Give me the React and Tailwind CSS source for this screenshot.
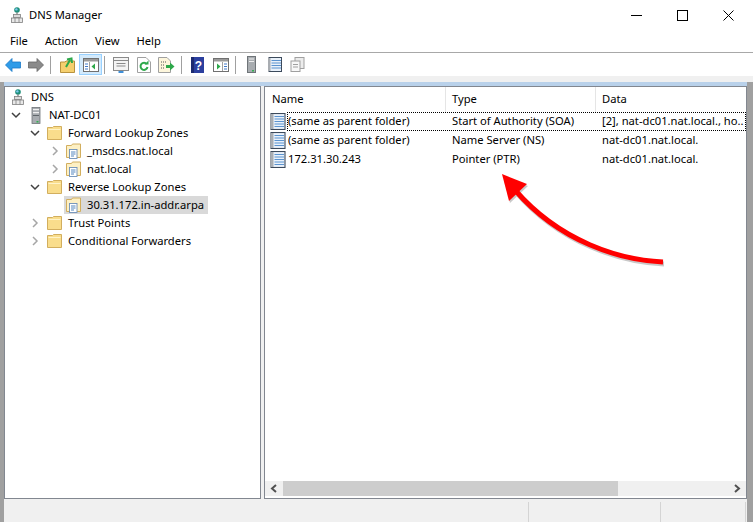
import React from "react";

const font = { fontFamily: '"Noto Sans", sans-serif' };

function Chevron({ open }) {
  return (
    <svg width="10" height="10" viewBox="0 0 10 10" className="shrink-0">
      {open ? (
        <path d="M1 3 L5 7 L9 3" fill="none" stroke="#404040" strokeWidth="1.5" />
      ) : (
        <path d="M3 1 L7 5 L3 9" fill="none" stroke="#a6a6a6" strokeWidth="1.5" />
      )}
    </svg>
  );
}

function DnsIcon() {
  return (
    <svg width="12" height="16" viewBox="0 0 12 16" className="shrink-0">
      <circle cx="6" cy="3" r="2.8" fill="#1f8f7a" />
      <circle cx="5.4" cy="2.4" r="1.2" fill="#7cc8ee" />
      <rect x="5.4" y="5.5" width="1.2" height="2.5" fill="#777" />
      <rect x="2.5" y="7.5" width="7" height="3" fill="#dcdcdc" stroke="#808080" strokeWidth="0.8" />
      <rect x="0.5" y="11" width="11" height="4.5" fill="#e8e8e8" stroke="#808080" strokeWidth="0.8" />
      <path d="M4 11 V15.5 M8 11 V15.5" stroke="#808080" strokeWidth="0.8" />
    </svg>
  );
}

function Server() {
  return (
    <svg width="10" height="17" viewBox="0 0 10 17" className="shrink-0">
      <rect x="1" y="0.5" width="8" height="16" fill="#a8acb0" stroke="#6f7478" strokeWidth="0.8" />
      <rect x="2" y="2" width="6" height="1.2" fill="#f0f0f0" />
      <rect x="2" y="5" width="6" height="1.2" fill="#f0f0f0" />
      <rect x="2" y="8" width="6" height="1" fill="#60666a" />
      <rect x="5.5" y="14" width="2" height="1.5" fill="#30b050" />
    </svg>
  );
}

function Folder() {
  return (
    <svg width="15" height="14" viewBox="0 0 15 14" className="shrink-0">
      <path d="M0.5 1.5 H5.5 L6.5 0.5 H14.5 V13.5 H0.5 Z" fill="#f9dd8c" stroke="#d2ae5e" strokeWidth="1" />
      <path d="M1.5 3.5 H13.5" stroke="#fff3c8" strokeWidth="1" />
    </svg>
  );
}

function ZoneFolder() {
  return (
    <svg width="15" height="16" viewBox="0 0 15 16" className="shrink-0">
      <path d="M0.5 2.5 H5.5 L6.5 1 H14.5 V14.5 H0.5 Z" fill="#fdf0c4" stroke="#d2ae5e" strokeWidth="1" />
      <rect x="3.5" y="6.5" width="7.5" height="9" fill="#fff" stroke="#6d8fb8" strokeWidth="0.9" />
      <path d="M5 9 H9.5 M5 11 H9.5 M5 13 H8" stroke="#3f78b8" strokeWidth="0.9" />
    </svg>
  );
}

function RecordIcon() {
  return (
    <svg width="16" height="17" viewBox="0 0 16 17" className="shrink-0">
      <rect x="1" y="0.5" width="14" height="16" fill="#e9f1fa" stroke="#3c4a5c" strokeWidth="1.1" />
      <rect x="0.5" y="1" width="3" height="15" fill="#a9adb2" />
      <path d="M4.5 3.5 H14 M4.5 6 H14 M4.5 8.5 H14 M4.5 11 H14 M4.5 13.5 H14" stroke="#5b93cf" strokeWidth="1.1" />
    </svg>
  );
}

function TreeRow({ indent, chevron, icon, label, iconGap, iconLeft, selected }) {
  return (
    <div className={`flex h-[18px] items-center ${indent}`}>
      <span className="flex w-[12px] shrink-0 justify-center">{chevron}</span>
      <span className={`flex h-full items-center ${iconLeft} ${iconGap} ${selected ? "bg-[#d9d9d9] pr-[4px]" : ""}`}>
        {icon}
        <span className="whitespace-nowrap">{label}</span>
      </span>
    </div>
  );
}

function Row({ name, type, data, focused }) {
  return (
    <div className="flex h-[19px] items-center">
      <div className="ml-[5px] shrink-0">
        <RecordIcon />
      </div>
      <div className={`ml-[1px] flex h-full min-w-0 flex-1 items-center border border-dotted ${focused ? "border-black" : "border-transparent"}`}>
        <div className="w-[158px] shrink-0 whitespace-nowrap">{name}</div>
        <div className="w-[150px] shrink-0 whitespace-nowrap pl-[6px]">{type}</div>
        <div className="min-w-0 whitespace-nowrap pl-[6px]">{data}</div>
      </div>
    </div>
  );
}

function ToolbarDivider({ spacing = "ml-[3px] mr-[4px]" }) {
  return <span className={`h-[18px] w-px bg-[#a0a0a0] ${spacing}`} />;
}

function Tool({ children, active }) {
  return (
    <span className={`flex h-[21px] w-[23px] items-center justify-center ${active ? "border border-[#99d1ff] bg-[#d3eafc]" : ""}`}>
      {children}
    </span>
  );
}

function Toolbar() {
  return (
    <div className="flex h-[24px] items-center border-t border-[#a8a8a8] pl-[5px]">
      <svg width="16" height="14" viewBox="0 0 16 14"><path d="M0.5 7 L7 0.5 V4 H15.5 V10 H7 V13.5 Z" fill="#2e9be8" stroke="#1a78c8" strokeWidth="0.8" /></svg>
      <span className="w-[7px]" />
      <svg width="16" height="14" viewBox="0 0 16 14"><path d="M15.5 7 L9 0.5 V4 H0.5 V10 H9 V13.5 Z" fill="#8a8a8a" stroke="#666" strokeWidth="0.8" /></svg>
      <ToolbarDivider spacing="ml-[6px] mr-[5px]" />
      <Tool>
        <svg width="15" height="16" viewBox="0 0 15 16"><path d="M0.5 5 H5 L6 4 H14.5 V15.5 H0.5 Z" fill="#f5cf6e" stroke="#b8923e" /><path d="M6 10 L10 3 M7 2.5 L11.5 1.5 L12 6" fill="none" stroke="#2da84a" strokeWidth="2" /></svg>
      </Tool>
      <Tool active>
        <svg width="16" height="14" viewBox="0 0 16 14"><rect x="0.5" y="0.5" width="15" height="13" fill="#fff" stroke="#707070" /><rect x="1" y="1" width="14" height="2.5" fill="#9a9a9a" /><path d="M12 5.5 L8.5 8.5 L12 11.5 Z" fill="#2da84a" /><path d="M2 6 H5 M2 8.5 H5 M2 11 H5" stroke="#3f78c8" /><path d="M6.5 4 V13" stroke="#a0a0a0" /></svg>
      </Tool>
      <ToolbarDivider spacing="ml-[2px] mr-[4px]" />
      <Tool>
        <svg width="16" height="16" viewBox="0 0 16 16"><rect x="0.5" y="0.5" width="15" height="13" fill="#f4f4f4" stroke="#8a8a8a" /><path d="M1 3.5 H15 M3.5 6.5 H12.5 M3.5 9 H12.5" stroke="#8a8a8a" /><rect x="5.5" y="14" width="5" height="2" fill="#3f8fd8" /></svg>
      </Tool>
      <Tool>
        <svg width="14" height="16" viewBox="0 0 14 16"><path d="M0.5 0.5 H9 L13.5 5 V15.5 H0.5 Z" fill="#fff" stroke="#a0a0a0" /><path d="M9.8 7.2 A3.5 3.5 0 1 0 10.5 10" fill="none" stroke="#2da84a" strokeWidth="2" /><path d="M7.5 7.5 H11.5 V3.5 Z" fill="#2da84a" /></svg>
      </Tool>
      <Tool>
        <svg width="17" height="16" viewBox="0 0 17 16"><path d="M0.5 0.5 H9 L12.5 4 V15.5 H0.5 Z" fill="#fdf6dc" stroke="#a0a0a0" /><path d="M3 5 H8 M3 8 H7 M3 11 H7" stroke="#555" strokeDasharray="1 1" /><path d="M8 8 H12 V5.5 L16.5 9.5 L12 13.5 V11 H8 Z" fill="#2da84a" /></svg>
      </Tool>
      <ToolbarDivider />
      <Tool>
        <svg width="13" height="16" viewBox="0 0 13 16"><rect width="13" height="16" fill="#2b3f9e" /><rect width="3" height="16" fill="#1c2a70" /><text x="7.5" y="12.5" fontSize="12" fontWeight="700" textAnchor="middle" fill="#fff" fontFamily="Liberation Sans">?</text></svg>
      </Tool>
      <Tool>
        <svg width="16" height="14" viewBox="0 0 16 14"><rect x="0.5" y="0.5" width="15" height="13" fill="#fff" stroke="#707070" /><rect x="1" y="1" width="14" height="2.5" fill="#9a9a9a" /><path d="M4 5.5 L7.5 8.5 L4 11.5 Z" fill="#2da84a" /><path d="M11 6 H14 M11 8.5 H14 M11 11 H14" stroke="#3f78c8" /><path d="M9.5 4 V13" stroke="#a0a0a0" /></svg>
      </Tool>
      <ToolbarDivider />
      <Tool>
        <svg width="9" height="17" viewBox="0 0 9 17"><rect x="0.5" y="0.5" width="8" height="16" fill="#a8acb0" stroke="#6f7478" /><path d="M2 3 H7 M2 5.5 H7" stroke="#eee" /><rect x="5" y="14" width="2" height="1.5" fill="#30b050" /></svg>
      </Tool>
      <Tool>
        <svg width="14" height="15" viewBox="0 0 14 15"><rect x="1" y="0.5" width="12.5" height="14" fill="#e9f1fa" stroke="#3c4a5c" /><rect x="0" y="1" width="2.5" height="13" fill="#a9adb2" /><path d="M3.5 3.5 H13 M3.5 6 H13 M3.5 8.5 H13 M3.5 11 H13" stroke="#5b93cf" /></svg>
      </Tool>
      <Tool>
        <svg width="15" height="15" viewBox="0 0 15 15"><rect x="5" y="0.5" width="9" height="11" fill="#ececec" stroke="#a0a0a0" /><rect x="1" y="4" width="9" height="10.5" fill="#f8f8f8" stroke="#a0a0a0" /><path d="M3 7.5 H8 M3 10 H8" stroke="#a0a0a0" /></svg>
      </Tool>
    </div>
  );
}

export default function App() {
  return (
    <div className="flex h-[522px] w-[753px] flex-col overflow-hidden bg-white text-[11.2px] text-black" style={font}>
      <div className="flex h-[30px] shrink-0 items-center pl-[11px]">
        <DnsIcon />
        <span className="ml-[6px]">DNS Manager</span>
        <div className="ml-auto flex items-center">
          <svg width="11" height="11" viewBox="0 0 11 11" className="mr-[35px]"><path d="M0 5.5 H11" stroke="#000" /></svg>
          <svg width="11" height="11" viewBox="0 0 11 11" className="mr-[35px]"><rect x="0.5" y="0.5" width="10" height="10" fill="none" stroke="#000" /></svg>
          <svg width="11" height="11" viewBox="0 0 11 11" className="mr-[19px]"><path d="M0.5 0.5 L10.5 10.5 M10.5 0.5 L0.5 10.5" stroke="#000" /></svg>
        </div>
      </div>
      <div className="flex h-[22px] shrink-0 items-center gap-[17px] pl-[10px]">
        <span>File</span>
        <span>Action</span>
        <span>View</span>
        <span>Help</span>
      </div>
      <Toolbar />
      <div className="h-[6px] shrink-0 bg-[#f0f0f0]" />
      <div className="flex min-h-0 flex-1 flex-col border-l-[4px] border-r-[6px] border-[#a0a0a0] bg-[#f0f0f0]">
        <div className="h-[4px] shrink-0 bg-[#b9d1ea]" />
        <div className="flex min-h-0 flex-1">
          <div className="w-[257px] shrink-0 border border-[#828790] bg-white pt-[1px]">
            <div className="flex h-[18px] items-center gap-[7px] pl-[7px]">
              <DnsIcon />
              <span>DNS</span>
            </div>
            <TreeRow indent="pl-[5px]" chevron={<Chevron open />} icon={<Server />} label="NAT-DC01" iconLeft="ml-[9px]" iconGap="gap-[8px]" />
            <TreeRow indent="pl-[24px]" chevron={<Chevron open />} icon={<Folder />} label="Forward Lookup Zones" iconLeft="ml-[6px]" iconGap="gap-[6px]" />
            <TreeRow indent="pl-[44px]" chevron={<Chevron />} icon={<ZoneFolder />} label="_msdcs.nat.local" iconLeft="ml-[5px]" iconGap="gap-[6px]" />
            <TreeRow indent="pl-[44px]" chevron={<Chevron />} icon={<ZoneFolder />} label="nat.local" iconLeft="ml-[5px]" iconGap="gap-[6px]" />
            <TreeRow indent="pl-[24px]" chevron={<Chevron open />} icon={<Folder />} label="Reverse Lookup Zones" iconLeft="ml-[6px]" iconGap="gap-[6px]" />
            <TreeRow indent="pl-[44px]" chevron={<span />} icon={<ZoneFolder />} label="30.31.172.in-addr.arpa" iconLeft="ml-[3px] pl-[2px]" iconGap="gap-[6px]" selected />
            <TreeRow indent="pl-[24px]" chevron={<Chevron />} icon={<Folder />} label="Trust Points" iconLeft="ml-[6px]" iconGap="gap-[6px]" />
            <TreeRow indent="pl-[24px]" chevron={<Chevron />} icon={<Folder />} label="Conditional Forwarders" iconLeft="ml-[6px]" iconGap="gap-[6px]" />
          </div>
          <div className="w-[3px] shrink-0" />
          <div className="relative flex min-w-0 flex-1 flex-col overflow-hidden border border-[#828790] bg-white">
            <div className="flex h-[25px] shrink-0 items-center">
              <div className="flex h-full w-[181px] shrink-0 items-center border-r border-[#e5e5e5] pl-[7px]">Name</div>
              <div className="flex h-full w-[150px] shrink-0 items-center border-r border-[#e5e5e5] pl-[6px]">Type</div>
              <div className="pl-[6px]">Data</div>
            </div>
            <Row name="(same as parent folder)" type="Start of Authority (SOA)" data="[2], nat-dc01.nat.local., ho.." focused />
            <Row name="(same as parent folder)" type="Name Server (NS)" data="nat-dc01.nat.local." />
            <Row name="172.31.30.243" type="Pointer (PTR)" data="nat-dc01.nat.local." />
            <div className="mt-auto mb-[2px] flex h-[15px] shrink-0 items-center bg-[#f0f0f0] pl-[1px] pr-[1px]">
              <svg width="17" height="15" viewBox="0 0 17 15"><path d="M10 4 L6 7.5 L10 11" fill="none" stroke="#505050" strokeWidth="2" /></svg>
              <div className="h-full w-[335px] bg-[#cdcdcd]" />
              <svg width="17" height="15" viewBox="0 0 17 15" className="ml-auto"><path d="M7 4 L11 7.5 L7 11" fill="none" stroke="#505050" strokeWidth="2" /></svg>
            </div>
            {/* arrow drawn over the list */}
            <svg width="190" height="100" viewBox="0 0 190 100" className="pointer-events-none absolute left-[230px] top-[85px]">
              <path d="M168 90 C125 88 65 70 20 18" fill="none" stroke="#c9c9c9" strokeWidth="5" transform="translate(1 2)" />
              <path d="M32 12 L14 29 L7 2 Z" fill="#c9c9c9" transform="translate(1 2)" />
              <path d="M168 90 C125 88 65 70 20 18" fill="none" stroke="#ff0000" strokeWidth="5" />
              <path d="M7 2 L32 12 L14 29 Z" fill="#ff0000" />
            </svg>
          </div>
        </div>
        <div className="flex h-[23px] shrink-0 justify-end pt-[3px] pr-[1px]">
          <div className="w-[132px] border-l border-[#d4d4d4]" />
          <div className="w-[86px] border-x border-[#d4d4d4]" />
        </div>
      </div>
    </div>
  );
}
